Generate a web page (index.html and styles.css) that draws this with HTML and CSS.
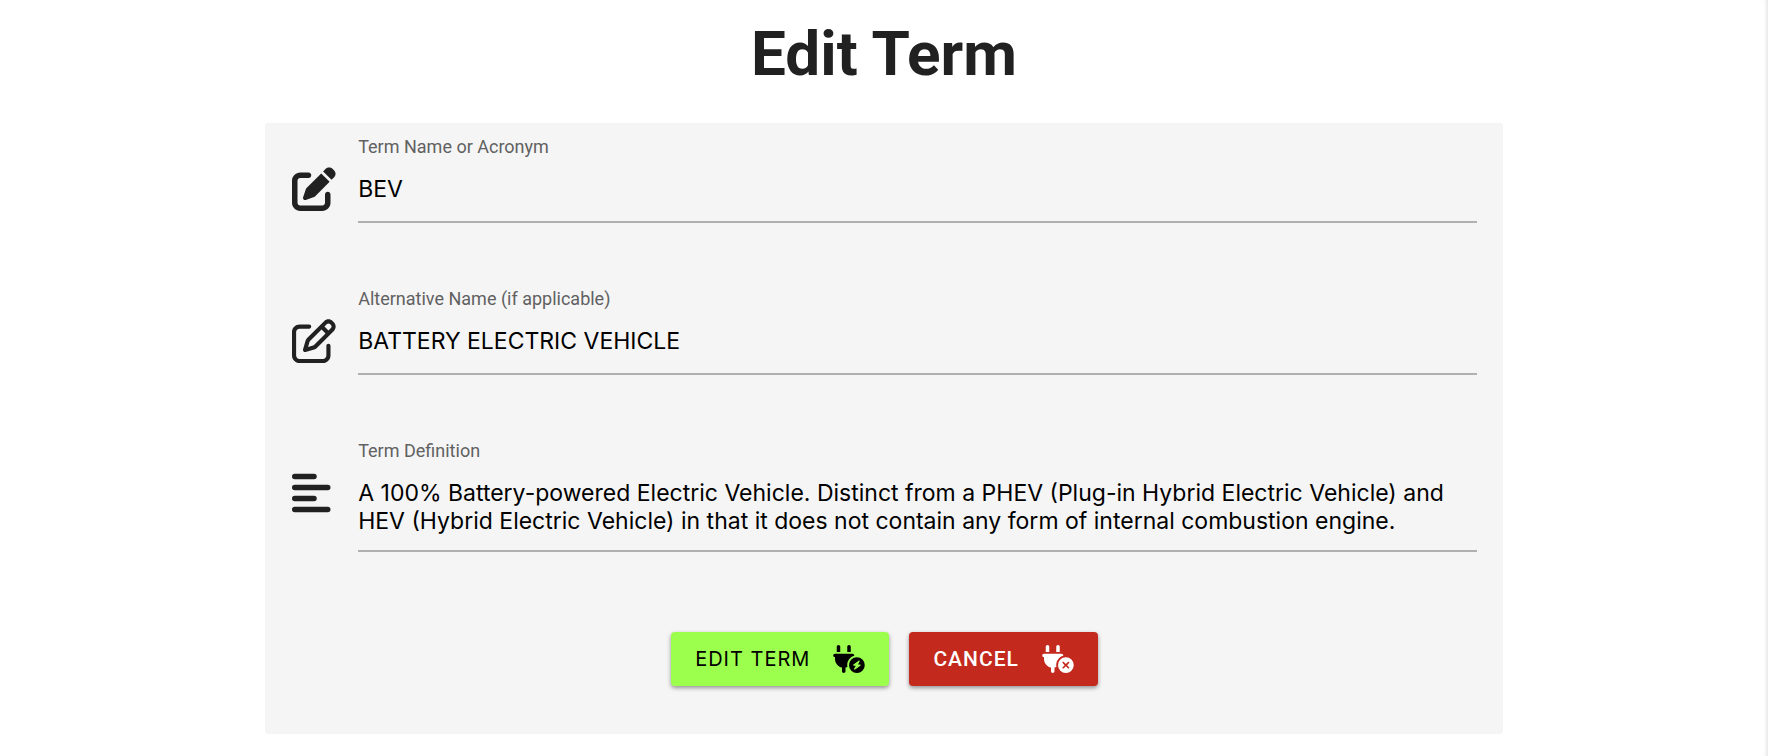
FILE: index.html
```html
<!DOCTYPE html>
<html lang="en">
<head>
<meta charset="utf-8">
<title>Edit Term</title>
<link rel="stylesheet" href="styles.css">
</head>
<body>
<main class="page">
  <h1 class="title">Edit Term</h1>
  <form class="panel">
    <div class="row">
      <svg class="row-icon" viewBox="0 0 512 512" aria-hidden="true"><path d="M471.6 21.7c-21.9-21.9-57.3-21.9-79.2 0L362.3 51.7l97.9 97.9 30.1-30.1c21.9-21.9 21.9-57.3 0-79.2L471.6 21.7zm-299.2 220c-6.1 6.1-10.8 13.6-13.5 21.9l-29.6 88.8c-2.9 8.6-.6 18.1 5.8 24.6s15.9 8.7 24.6 5.8l88.8-29.6c8.2-2.7 15.7-7.4 21.9-13.5L437.7 172.3 339.7 74.3 172.4 241.7zM96 64C43 64 0 107 0 160V416c0 53 43 96 96 96H352c53 0 96-43 96-96V320c0-17.7-14.3-32-32-32s-32 14.3-32 32v96c0 17.7-14.3 32-32 32H96c-17.7 0-32-14.3-32-32V160c0-17.7 14.3-32 32-32h96c17.7 0 32-14.3 32-32s-14.3-32-32-32H96z"/></svg>
      <div class="field">
        <label class="label" for="name">Term Name or Acronym</label>
        <input class="control" id="name" type="text" value="BEV">
      </div>
    </div>
    <div class="row">
      <svg class="row-icon" viewBox="0 0 512 512" aria-hidden="true"><path d="M441 58.9L453.1 71c9.4 9.4 9.4 24.6 0 33.9L424 134.1 377.9 88 407 58.9c9.4-9.4 24.6-9.4 33.9 0zM209.8 256.2L344 121.9 390.1 168 255.8 302.2c-2.9 2.9-6.5 5-10.4 6.1l-58.5 16.7 16.7-58.5c1.1-3.9 3.2-7.5 6.1-10.4zM373.1 25L175.8 222.2c-8.7 8.7-15 19.4-18.3 31.1l-28.6 100c-2.4 8.4-.1 17.4 6.1 23.6s15.2 8.5 23.6 6.1l100-28.6c11.8-3.4 22.5-9.7 31.1-18.3L487 138.9c28.1-28.1 28.1-73.7 0-101.8L474.9 25C446.8-3.1 401.2-3.1 373.1 25zM88 64C39.4 64 0 103.4 0 152V424c0 48.6 39.4 88 88 88H360c48.6 0 88-39.4 88-88V312c0-13.3-10.7-24-24-24s-24 10.7-24 24V424c0 22.1-17.9 40-40 40H88c-22.1 0-40-17.9-40-40V152c0-22.1 17.9-40 40-40H200c13.3 0 24-10.7 24-24s-10.7-24-24-24H88z"/></svg>
      <div class="field">
        <label class="label" for="alt">Alternative Name (if applicable)</label>
        <input class="control" id="alt" type="text" value="BATTERY ELECTRIC VEHICLE">
      </div>
    </div>
    <div class="row">
      <svg class="row-icon" viewBox="0 0 512 512" aria-hidden="true"><path d="M32 32H256a32 32 0 0 1 0 64H32a32 32 0 0 1 0-64zM32 160H416a32 32 0 0 1 0 64H32a32 32 0 0 1 0-64zM32 288H256a32 32 0 0 1 0 64H32a32 32 0 0 1 0-64zM32 416H416a32 32 0 0 1 0 64H32a32 32 0 0 1 0-64z"/></svg>
      <div class="field">
        <label class="label" for="definition">Term Definition</label>
        <textarea class="control control-area" id="definition" rows="2">A 100% Battery-powered Electric Vehicle. Distinct from a PHEV (Plug-in Hybrid Electric Vehicle) and HEV (Hybrid Electric Vehicle) in that it does not contain any form of internal combustion engine.</textarea>
      </div>
    </div>
    <div class="actions">
      <button class="button button-submit" type="submit">EDIT TERM
        <svg class="button-icon" viewBox="0 0 576 512" aria-hidden="true"><path fill-rule="evenodd" d="M96 0C78.3 0 64 14.3 64 32v96h64V32c0-17.7-14.3-32-32-32zM288 0c-17.7 0-32 14.3-32 32v96h64V32c0-17.7-14.3-32-32-32zM32 160c-17.7 0-32 14.3-32 32s14.3 32 32 32v32c0 77.4 55 142 128 156.8V480c0 17.7 14.3 32 32 32s32-14.3 32-32V412.8c12.3-2.5 24.1-6.4 35.1-11.5c-2.1-10.8-3.1-21.9-3.1-33.3c0-80.3 53.8-148 127.3-169.2c.5-2.2 .7-4.5 .7-6.8c0-17.7-14.3-32-32-32H32zM432 512a144 144 0 1 0 0-288 144 144 0 1 0 0 288zm47.9-225c4.3 3.7 5.4 9.9 2.6 14.9L452.4 356H488c5.2 0 9.8 3.3 11.4 8.2s-.1 10.3-4.2 13.4l-96 72c-4.5 3.4-10.8 3.2-15.1-.6s-5.4-9.9-2.6-14.9L411.6 380H376c-5.2 0-9.8-3.3-11.4-8.2s.1-10.3 4.2-13.4l96-72c4.5-3.4 10.8-3.2 15.1 .6z"/></svg>
      </button>
      <button class="button button-cancel" type="button">CANCEL
        <svg class="button-icon" viewBox="0 0 576 512" aria-hidden="true"><path fill-rule="evenodd" d="M96 0C78.3 0 64 14.3 64 32v96h64V32c0-17.7-14.3-32-32-32zM288 0c-17.7 0-32 14.3-32 32v96h64V32c0-17.7-14.3-32-32-32zM32 160c-17.7 0-32 14.3-32 32s14.3 32 32 32v32c0 77.4 55 142 128 156.8V480c0 17.7 14.3 32 32 32s32-14.3 32-32V412.8c12.3-2.5 24.1-6.4 35.1-11.5c-2.1-10.8-3.1-21.9-3.1-33.3c0-80.3 53.8-148 127.3-169.2c.5-2.2 .7-4.5 .7-6.8c0-17.7-14.3-32-32-32H32zM432 512a144 144 0 1 0 0-288 144 144 0 1 0 0 288zM491.3 331.3c6.2-6.2 6.2-16.4 0-22.6s-16.4-6.2-22.6 0L432 345.4l-36.7-36.7c-6.2-6.2-16.4-6.2-22.6 0s-6.2 16.4 0 22.6L409.4 368l-36.7 36.7c-6.2 6.2-6.2 16.4 0 22.6s16.4 6.2 22.6 0L432 390.6l36.7 36.7c6.2 6.2 16.4 6.2 22.6 0s6.2-16.4 0-22.6L454.6 368l36.7-36.7z"/></svg>
      </button>
    </div>
  </form>
</main>
</body>
</html>
```
FILE: styles.css
```css
* {
  box-sizing: border-box;
}

body {
  margin: 0;
  background: #fff;
  color: #212121;
  font-family: Roboto, "Liberation Sans", sans-serif;
}

.page {
  min-height: 100vh;
  padding: 16px 0 23px;
  box-shadow: inset -4px 0 4px -3px #ddd;
}

.title {
  margin: 0 0 32px;
  font-size: 62px;
  line-height: 75px;
  font-weight: 700;
  text-align: center;
}

.panel {
  display: flex;
  flex-direction: column;
  gap: 66px;
  width: 70%;
  margin: 0 auto;
  padding: 14px 26px 48px 27px;
  border-radius: 3px;
  background: #f5f5f5;
}

.row {
  display: flex;
  gap: 22px;
}

.row-icon {
  flex: none;
  width: 44px;
  height: 44px;
  margin-top: 30px;
  fill: currentColor;
}

.field {
  display: flex;
  flex: 1;
  flex-direction: column;
}

.label {
  color: #616161;
  font-size: 18px;
  line-height: 20px;
}

.control {
  display: block;
  width: 100%;
  height: 66px;
  padding: 18px 0;
  border: 0;
  border-bottom: 2px solid #b0b0b0;
  border-radius: 0;
  outline: 0;
  background: none;
  color: #000;
  font: 23px/28px Inter, sans-serif;
}

.control-area {
  height: auto;
  padding-bottom: 15px;
  resize: none;
  overflow: hidden;
}

.actions {
  display: flex;
  justify-content: center;
  gap: 20px;
  padding-top: 14px;
}

.button {
  display: flex;
  align-items: center;
  gap: 23px;
  height: 54px;
  padding: 0 24px;
  border: 0;
  border-radius: 4px;
  box-shadow: 0 2px 4px rgba(0, 0, 0, 0.4);
  letter-spacing: 1px;
}

.button-submit {
  background: #9dff4d;
  color: #000;
  font: 20px/28px Inter, sans-serif;
}

.button-cancel {
  background: #c4291d;
  color: #fff;
  font: 500 21px/28px Roboto, sans-serif;
}

.button-icon {
  width: 32px;
  height: 28px;
  fill: currentColor;
}
```
